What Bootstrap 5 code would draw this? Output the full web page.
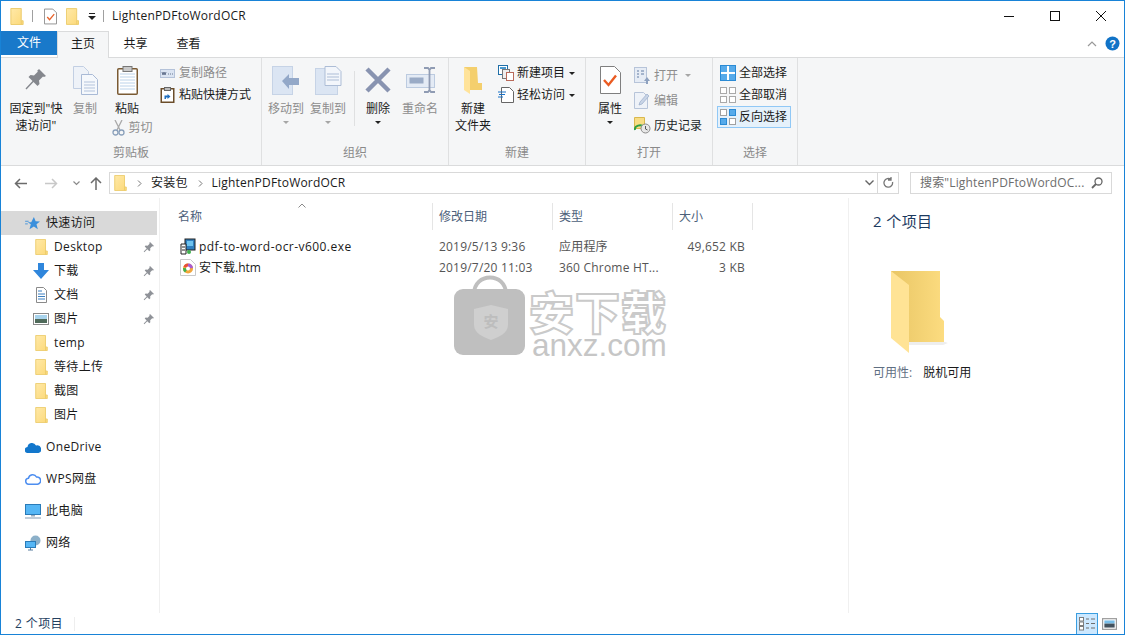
<!DOCTYPE html>
<html lang="zh-CN">
<head>
<meta charset="UTF-8">
<title>LightenPDFtoWordOCR</title>
<link href="https://cdn.jsdelivr.net/npm/bootstrap@5.3.0/dist/css/bootstrap.min.css" rel="stylesheet">
<style>
html, body { height: 100%; overflow: hidden; }
body { font-family: "Open Sans", "Noto Sans CJK SC", sans-serif; font-size: 12px; line-height: 16px; color: #1a1a1a; background: #fff; }
.win { width: 1125px; height: 635px; border: 1px solid #1883d7; position: relative; overflow: hidden; }

/* title bar */
.titlebar { height: 30px; }
.qat { padding-left: 9px; }
.q-sep1 { margin: 0 11px 0 8px; }
.q-doc { margin-right: 9px; }
.q-caret { margin: 0 7px 0 9px; }
.q-sep2 { margin-right: 8px; }
.title-text { letter-spacing: .2px; }
.qsep { width: 1px; height: 12px; background: #a0a0a0; }
.capbtn { width: 46px; height: 29px; }

/* tabs */
.tabrow { height: 26px; position: relative; }
.tab-file { width: 56px; height: 24px; background: #1979ca; color: #fff; }
.tab-home { width: 52px; height: 27px; padding-bottom: 2px; background: #f5f6f7; border: 1px solid #dadbdc; border-bottom: 0; position: relative; z-index: 2; }
.tab-plain { width: 53px; height: 25px; }
.tab-tools { padding: 5px 4px 0 0; }

/* ribbon */
.ribbon { height: 109px; background: #f5f6f7; border-top: 1px solid #dadbdc; border-bottom: 1px solid #dadbdc; }
.rgroup { height: 107px; border-right: 1px solid #dfe0e1; flex: none; padding-top: 2px; }
.g-clip { width: 261px; }
.g-org { width: 187px; }
.g-new { width: 137px; }
.g-open { width: 127px; }
.g-sel { width: 85px; }
.rbody { height: 85px; }
.rlabel { height: 18px; text-align: center; color: #8a8a8a; }
.rbig { display: flex; flex-direction: column; align-items: center; flex: none; text-align: center; line-height: 17px; }
.ricon { height: 40px; display: flex; align-items: center; justify-content: center; }
.rsmall { display: flex; align-items: center; gap: 3px; height: 22px; white-space: nowrap; }
.rsmall-tall { height: 25px; }
.muted-t { color: #8d8d8d; }
.caret-d { width: 0; height: 0; border-left: 3px solid transparent; border-right: 3px solid transparent; border-top: 3px solid #222; display: inline-block; }
.caret-g { border-top-color: #a6a6a6; }
.caret-near { margin-left: 1px; }
.rvsep { width: 1px; height: 55px; background: #dfe0e1; margin: 11px 0 0 5px; flex: none; }
.rselected { border: 1px solid #90c8f6; background: #e5f1fb; width: 74px; padding-left: 2px; }
.b-pin { width: 64px; margin-left: 3px; }
.b-copy { width: 34px; }
.b-paste { width: 50px; flex: none; }
.b-cut { margin: 3px 0 0 10px; white-space: nowrap; }
.b-paste-lbl { line-height: 17px; }
.col-clip { margin-left: 8px; padding-top: 2px; }
.col-clip .rsmall { gap: 4px; }
.b-move { width: 42px; margin-left: 3px; }
.b-copyto { width: 42px; }
.b-del { width: 38px; margin-left: 4px; }
.b-ren { width: 40px; margin-left: 3px; }
.b-newf { width: 48px; }
.col-new { padding: 2px 0 0 1px; }
.b-prop { width: 48px; }
.col-open { padding-top: 3px; }
.col-sel { padding: 2px 0 0 4px; }
.sel-plain { padding-left: 3px; }

/* address bar */
.addrbar { height: 32px; padding-top: 2px; }
.nav-btns { width: 108px; padding-left: 13px; gap: 18px; }
.nb-down { margin: 0 -2px 0 -3px; }
.nb-up { margin-left: -6px; }
.crumbs { width: 768px; height: 22px; border: 1px solid #d9d9d9; border-right: 0; }
.cr-fold { margin-left: 4px; }
.cr-chev { margin: 0 9px 0 10px; }
.cr-drop { margin: 0 3px 0 auto; }
.refresh { width: 22px; height: 22px; border: 1px solid #d9d9d9; }
.searchbox { width: 202px; height: 22px; border: 1px solid #d9d9d9; color: #6d6d6d; margin-left: 11px; padding: 0 8px 0 9px; white-space: nowrap; overflow: hidden; letter-spacing: .15px; }
.crumb-t { letter-spacing: .2px; }

/* main */
.mainrow { height: 415px; }
.nav-pane { width: 159px; flex: none; border-right: 1px solid #f0f0f0; padding: 13px 2px 0 0; }
.nav-item { height: 24px; display: flex; align-items: center; position: relative; white-space: nowrap; }
.nav-lvl2 { padding-left: 34px; gap: 6px; }
.nav-lvl1 { padding-left: 24px; gap: 5px; }
.nav-active { background: #d9d9d9; }
.nav-gap { height: 8px; }
.nav-pin { margin-left: auto; margin-right: 2px; flex: none; }
.nav-txt { letter-spacing: .35px; }
.ico-wide { margin: 0 -1px 0 -2px; }
.file-pane { width: 689px; flex: none; border-right: 1px solid #f0f0f0; position: relative; }
.fhead { height: 38px; color: #4c607a; }
.fh { flex: none; height: 27px; padding-left: 6px; border-right: 1px solid #e5e5e5; display: flex; align-items: center; margin-top: 5px; width: 120px; }
.fh-name { width: 273px; padding-left: 18px; }
.fh-size { width: 80px; }
.sort-mark { position: absolute; left: 138px; top: 5px; }
.frow { height: 21px; display: flex; align-items: center; color: #333; }
.fc-name { width: 274px; padding-left: 20px; display: flex; align-items: center; gap: 3px; letter-spacing: .45px; color: #1a1a1a; flex: none; }
.fc-name-cn { letter-spacing: 0; }
.fc-date, .fc-type { width: 120px; padding-left: 5px; color: #555; flex: none; letter-spacing: .2px; }
.fc-size { width: 71px; text-align: right; color: #555; flex: none; letter-spacing: .2px; }
.detail-pane { padding: 13px 0 0 24px; flex: 1; }
.detail-head { font-size: 15px; line-height: 20px; color: #1c3a5f; letter-spacing: .4px; }
.detail-fold { display: block; margin: 39px 0 0 17px; }
.detail-avail { margin-top: 11px; }
.avail-k { color: #5f6f82; margin-right: 11px; }

/* status bar */
.statusbar { height: 21px; padding-left: 14px; color: #24405f; }
.status-txt { letter-spacing: .4px; }
.status-sep { width: 1px; height: 14px; background: #eee; margin-left: 11px; }
.view-group { gap: 4px; margin-right: 7px; }
.view-on { width: 22px; height: 22px; background: #cce8ff; border: 1px solid #3a9ee0; }

/* watermark lies over the file list */
.wm { position: absolute; left: 294px; top: 76px; width: 220px; height: 92px; pointer-events: none; }
.wm-cn { position: absolute; left: 75px; top: 17px; font-family: "Noto Sans CJK SC", sans-serif; font-size: 45px; line-height: 40px; font-weight: 900; color: #fff; -webkit-text-stroke: 2px #cacaca; letter-spacing: 1px; white-space: nowrap; }
.wm-en { position: absolute; left: 78px; top: 60px; font-family: "Liberation Sans", sans-serif; font-size: 31.500px; line-height: 22px; color: #c6c6c6; white-space: nowrap; }
.wm-bag { position: absolute; left: 0; top: 0; }
.wm-an { position: absolute; left: 25px; top: 38px; width: 24px; text-align: center; font-family: "Noto Sans CJK SC", sans-serif; font-size: 15px; line-height: 18px; color: #bdbdbd; font-weight: 700; }
</style>
</head>
<body>
<svg width="0" height="0" class="position-absolute">
  <defs>
    <linearGradient id="fg" x1="0" y1="0" x2="1" y2="1"><stop offset="0" stop-color="#ffe9a8"/><stop offset="1" stop-color="#fcd979"/></linearGradient>
    <linearGradient id="fback" x1="0" y1="0" x2="1" y2="0"><stop offset="0" stop-color="#e9c665"/><stop offset="1" stop-color="#fcdc80"/></linearGradient>
    <symbol id="fold" viewBox="0 0 14 18">
      <path d="M.5 .5h11v13h2v4H.5z" fill="url(#fg)" stroke="#eccb6a"/>
      <path d="M11.500 13.500v4" stroke="#eccb6a"/>
    </symbol>
    <symbol id="pin" viewBox="0 0 12 12">
      <path d="M7 1l4 4-1 .6-.8-.3-2 2 .1 2-1 .9-2-2-3 3-.6-.6 3-3-2-2 .9-1 2 .1 2-2-.3-.8z" fill="#8f9298"/>
    </symbol>
  </defs>
</svg>
<div class="win d-flex flex-column">

  <div class="titlebar d-flex align-items-center">
    <div class="qat d-flex align-items-center flex-grow-1">
      <svg width="14" height="17"><use href="#fold"/></svg>
      <span class="qsep q-sep1"></span>
      <svg width="13" height="17" viewBox="0 0 14 17" class="q-doc"><path d="M.5 .5h9l4 4v12H.5z" fill="#fff" stroke="#8d8d8d"/><path d="M3.500 9l2.500 3 5-6" fill="none" stroke="#e8622a" stroke-width="1.400"/></svg>
      <svg width="13" height="17"><use href="#fold"/></svg>
      <svg width="8" height="7" viewBox="0 0 8 7" class="q-caret"><path d="M1 0h6v1H1zM0 3h8L4 7z" fill="#222"/></svg>
      <span class="qsep q-sep2"></span>
      <span class="title-text">LightenPDFtoWordOCR</span>
    </div>
    <div class="d-flex">
      <div class="capbtn d-flex align-items-center justify-content-center"><svg width="10" height="10"><path d="M0 5.500h10" stroke="#111"/></svg></div>
      <div class="capbtn d-flex align-items-center justify-content-center"><svg width="10" height="10"><rect x=".5" y=".5" width="9" height="9" fill="none" stroke="#111"/></svg></div>
      <div class="capbtn d-flex align-items-center justify-content-center"><svg width="10" height="10"><path d="M0 0l10 10M10 0L0 10" stroke="#111"/></svg></div>
    </div>
  </div>

  <div class="tabrow d-flex align-items-start">
    <div class="tab-file d-flex align-items-center justify-content-center">文件</div>
    <div class="tab-home d-flex align-items-center justify-content-center">主页</div>
    <div class="tab-plain d-flex align-items-center justify-content-center">共享</div>
    <div class="tab-plain d-flex align-items-center justify-content-center">查看</div>
    <div class="tab-tools ms-auto d-flex align-items-center gap-2">
      <svg width="10" height="6" viewBox="0 0 10 6"><path d="M1 5l4-4 4 4" fill="none" stroke="#999" stroke-width="1.200"/></svg>
      <svg width="15" height="15" viewBox="0 0 15 15"><circle cx="7.500" cy="7.500" r="7" fill="#1173c7"/><text x="7.500" y="11.500" font-size="11" font-weight="700" fill="#fff" text-anchor="middle" font-family="Liberation Sans">?</text></svg>
    </div>
  </div>

  <div class="ribbon d-flex">
    <!-- clipboard -->
    <div class="rgroup g-clip">
      <div class="rbody d-flex">
        <div class="rbig b-pin">
          <div class="ricon"><svg width="22" height="24" viewBox="0 0 22 24"><path d="M14 1l7 7-2 1-1-.5-4 4 .5 3.500-2 2-4-4-7 7.500-1-1 7-7.500-4-4 2-2 3.500.5 4-4L12 3z" fill="#84878d"/></svg></div>
          <div>固定到"快<br>速访问"</div>
        </div>
        <div class="rbig b-copy muted-t">
          <div class="ricon"><svg width="25" height="29" viewBox="0 0 25 29"><path d="M.5 .5h10l5 5v17H.5z" fill="#eef2f8" stroke="#c2cfe3"/><path d="M8.500 8.500h11l5 5v15h-16z" fill="#f5f8fc" stroke="#a9bad6"/><path d="M11 16h11M11 19h11M11 22h11M11 25h11" stroke="#b3c3dc"/></svg></div>
          <div>复制</div>
        </div>
        <div class="b-paste d-flex flex-column align-items-center">
          <div class="ricon"><svg width="21" height="29" viewBox="0 0 21 29"><rect x=".75" y="2.750" width="19.500" height="25.500" rx="1" fill="#fff" stroke="#7a5a33" stroke-width="1.500"/><path d="M3 8h15M3 11h15M3 14h15M3 17h15M3 20h15M3 23h15" stroke="#bcd3ea"/><rect x="6" y=".5" width="9" height="5" fill="#c9c9c9" stroke="#777"/></svg></div>
          <div class="b-paste-lbl">粘贴</div>
          <div class="b-cut d-flex align-items-center muted-t gap-1"><svg width="13" height="16" viewBox="0 0 13 16"><path d="M3 0l5 10M10 0L5 10" stroke="#a9a9a9" stroke-width="1.300"/><circle cx="3.500" cy="12.500" r="2.500" fill="none" stroke="#8aa0bb" stroke-width="1.300"/><circle cx="9.500" cy="12.500" r="2.500" fill="none" stroke="#8aa0bb" stroke-width="1.300"/></svg>剪切</div>
        </div>
        <div class="col-clip">
          <div class="rsmall muted-t"><svg width="15" height="9" viewBox="0 0 15 9"><rect x=".5" y=".5" width="14" height="8" fill="#dbe4f2" stroke="#b4c2d9"/><path d="M2 3l1 3 1-3 1 3 1-3M8 5h1M10 5h1M12 5h1" stroke="#4a5a78" stroke-width=".8" fill="none"/></svg>复制路径</div>
          <div class="rsmall"><svg width="15" height="16" viewBox="0 0 14 16"><rect x=".75" y="1.750" width="12.500" height="13.500" fill="#fff" stroke="#6b4d2a" stroke-width="1.500"/><rect x="4" y=".5" width="6" height="3" fill="#bbb" stroke="#666"/><path d="M4 12V8.500h3V7l3 2.500L7 12v-1.500H5.500V12z" fill="#1f6fc0"/></svg>粘贴快捷方式</div>
        </div>
      </div>
      <div class="rlabel">剪贴板</div>
    </div>
    <!-- organize -->
    <div class="rgroup g-org">
      <div class="rbody d-flex">
        <div class="rbig b-move muted-t">
          <div class="ricon"><svg width="28" height="29" viewBox="0 0 28 29"><rect x=".5" y=".5" width="20" height="28" fill="#dbe5f3" stroke="#c6d3e6"/><path d="M10 15l7-7v4h10v7H17v4z" fill="#93a8c8"/></svg></div>
          <div>移动到</div>
          <span class="caret-d caret-g mt-1"></span>
        </div>
        <div class="rbig b-copyto muted-t">
          <div class="ricon"><svg width="27" height="29" viewBox="0 0 27 29"><rect x=".5" y="2.500" width="22" height="26" fill="#dbe5f3" stroke="#c6d3e6"/><path d="M10 .5h11l5 5v14H10z" fill="#f3f6fb" stroke="#adbdd6"/><path d="M12 8h12M12 11h12M12 14h12" stroke="#adbdd6"/></svg></div>
          <div>复制到</div>
          <span class="caret-d caret-g mt-1"></span>
        </div>
        <div class="rvsep"></div>
        <div class="rbig b-del">
          <div class="ricon"><svg width="26" height="26" viewBox="0 0 26 26"><path d="M2 2l22 22M24 2L2 24" stroke="#8893b0" stroke-width="4.500"/></svg></div>
          <div>删除</div>
          <span class="caret-d mt-1"></span>
        </div>
        <div class="rbig b-ren muted-t">
          <div class="ricon"><svg width="29" height="26" viewBox="0 0 29 26"><rect x=".5" y="7.500" width="28" height="13" fill="#e4ebf5" stroke="#bccbe0"/><rect x="3.500" y="10.500" width="14" height="6" fill="#9aabc6"/><path d="M18 1h4l1.500 2L25 1h4M23.500 3v20M18 25h4l1.500-2 1.500 2h4" fill="none" stroke="#8f9bb3" stroke-width="1.800"/></svg></div>
          <div>重命名</div>
        </div>
      </div>
      <div class="rlabel">组织</div>
    </div>
    <!-- new -->
    <div class="rgroup g-new">
      <div class="rbody d-flex">
        <div class="rbig b-newf">
          <div class="ricon"><svg width="20" height="28" viewBox="0 0 20 28"><path d="M1 1h13l1 16h4v7H5z" fill="#f4cf6d"/><path d="M1 1l6 4v23l-6-4z" fill="#ffe39a"/></svg></div>
          <div>新建<br>文件夹</div>
        </div>
        <div class="col-new">
          <div class="rsmall"><svg width="16" height="16" viewBox="0 0 16 16"><rect x=".5" y=".5" width="9" height="9" fill="#fff" stroke="#1f6fa8"/><rect x="2" y="2" width="6" height="2" fill="#4a9ad0"/><rect x="4.500" y="4.500" width="7" height="9" fill="#eee" stroke="#777"/><rect x="8.500" y="7.500" width="7" height="8" fill="#fff" stroke="#b96a5a"/></svg>新建项目<span class="caret-d caret-near"></span></div>
          <div class="rsmall"><svg width="16" height="16" viewBox="0 0 16 16"><path d="M3.500 .5h8l4 4v11h-12z" fill="#fff" stroke="#666"/><path d="M0 5h8M1 7.500h6M0 10h5" stroke="#1a73c8"/></svg>轻松访问<span class="caret-d caret-near"></span></div>
        </div>
      </div>
      <div class="rlabel">新建</div>
    </div>
    <!-- open -->
    <div class="rgroup g-open">
      <div class="rbody d-flex">
        <div class="rbig b-prop">
          <div class="ricon"><svg width="21" height="28" viewBox="0 0 21 28"><path d="M.5 .5h14l6 6v21H.5z" fill="#fff" stroke="#7f7f7f"/><path d="M4 14l4.500 5L16 9.500" fill="none" stroke="#ea5b22" stroke-width="2.400"/></svg></div>
          <div>属性</div>
          <span class="caret-d mt-1"></span>
        </div>
        <div class="col-open muted-t">
          <div class="rsmall rsmall-tall"><svg width="17" height="17" viewBox="0 0 17 17"><rect x=".5" y=".5" width="12" height="15" fill="#e6ecf5" stroke="#b7c4d9"/><path d="M3 4h2M3 7h2M3 10h2M7 4h3M7 7h3" stroke="#8ea1bf" stroke-width="1.400"/><path d="M10 14l3-4 3 4h-2v3h-2v-3z" fill="#8ea1bf"/></svg>打开<span class="caret-d caret-g ms-1"></span></div>
          <div class="rsmall rsmall-tall"><svg width="17" height="17" viewBox="0 0 17 17"><path d="M.5 .5h9l4 4v12H.5z" fill="#eef2f8" stroke="#b7c4d9"/><path d="M5 13l1-3 7-8 2 2-7 8z" fill="#c9d5e7" stroke="#98abc8" stroke-width=".7"/></svg>编辑</div>
          <div class="rsmall rsmall-tall text-body"><svg width="17" height="17" viewBox="0 0 17 17"><path d="M.5 .5h10v11h-10z" fill="#f8dd84" stroke="#d9b84e"/><path d="M1 13a5 4 0 0 1 9-3" fill="none" stroke="#2f9e41" stroke-width="2"/><circle cx="11.500" cy="11.500" r="4.500" fill="#e8e8e8" stroke="#8a8a8a"/><path d="M11.500 9v3l2 1" fill="none" stroke="#555"/></svg>历史记录</div>
        </div>
      </div>
      <div class="rlabel">打开</div>
    </div>
    <!-- select -->
    <div class="rgroup g-sel">
      <div class="rbody col-sel">
        <div class="rsmall sel-plain"><svg width="16" height="16" viewBox="0 0 16 16"><rect x=".5" y=".5" width="15" height="15" fill="#fff" stroke="#2a8ad4"/><path d="M1 1h6v6H1zM9 1h6v6H9zM1 9h6v6H1zM9 9h6v6H9z" fill="#56aaea"/></svg>全部选择</div>
        <div class="rsmall sel-plain"><svg width="16" height="16" viewBox="0 0 16 16" fill="#fff" stroke="#a9a9a9"><rect x=".5" y=".5" width="6" height="6"/><rect x="9.500" y=".5" width="6" height="6"/><rect x=".5" y="9.500" width="6" height="6"/><rect x="9.500" y="9.500" width="6" height="6"/></svg>全部取消</div>
        <div class="rsmall rselected"><svg width="16" height="16" viewBox="0 0 16 16"><g fill="#fff" stroke="#a0a0a0"><rect x=".5" y=".5" width="6" height="6"/><rect x="9.500" y="9.500" width="6" height="6"/></g><g fill="#56aaea" stroke="#2a8ad4"><rect x="9.500" y=".5" width="6" height="6"/><rect x=".5" y="9.500" width="6" height="6"/></g></svg>反向选择</div>
      </div>
      <div class="rlabel">选择</div>
    </div>
  </div>

  <div class="addrbar d-flex align-items-center">
    <div class="nav-btns d-flex align-items-center">
      <svg width="13" height="11" viewBox="0 0 13 11"><path d="M6 1L1.500 5.500 6 10M1.500 5.500H13" fill="none" stroke="#6b6b6b" stroke-width="1.500"/></svg>
      <svg width="13" height="11" viewBox="0 0 13 11"><path d="M7 1l4.500 4.500L7 10M11.500 5.500H0" fill="none" stroke="#c8c8c8" stroke-width="1.500"/></svg>
      <svg width="7" height="5" viewBox="0 0 7 5" class="nb-down"><path d="M.5 .5l3 3 3-3" fill="none" stroke="#8a8a8a" stroke-width="1.200"/></svg>
      <svg width="12" height="13" viewBox="0 0 12 13" class="nb-up"><path d="M1 6l5-5 5 5M6 1v12" fill="none" stroke="#6b6b6b" stroke-width="1.500"/></svg>
    </div>
    <div class="crumbs d-flex align-items-center">
      <svg width="13" height="16" class="cr-fold"><use href="#fold"/></svg>
      <svg width="5" height="7" viewBox="0 0 5 7" class="cr-chev"><path d="M1 .5l3 3-3 3" fill="none" stroke="#777"/></svg>
      <span class="crumb-t">安装包</span>
      <svg width="5" height="7" viewBox="0 0 5 7" class="cr-chev"><path d="M1 .5l3 3-3 3" fill="none" stroke="#777"/></svg>
      <span class="crumb-t">LightenPDFtoWordOCR</span>
      <svg width="9" height="6" viewBox="0 0 9 6" class="cr-drop"><path d="M.5 .5l4 4 4-4" fill="none" stroke="#666" stroke-width="1.400"/></svg>
    </div>
    <div class="refresh d-flex align-items-center justify-content-center"><svg width="11" height="12" viewBox="0 0 11 12"><path d="M9.500 5a4.300 4.300 0 1 1-1.500-2.500M8 0v3H5" fill="none" stroke="#777" stroke-width="1.300"/></svg></div>
    <div class="searchbox d-flex align-items-center justify-content-between">
      <span>搜索"LightenPDFtoWordOC...</span>
      <svg width="12" height="12" viewBox="0 0 12 12"><circle cx="7.500" cy="4.500" r="3.500" fill="none" stroke="#666" stroke-width="1.300"/><path d="M5 7l-4 4" stroke="#666" stroke-width="1.800"/></svg>
    </div>
  </div>

  <div class="mainrow d-flex position-relative">
    <div class="nav-pane">
      <div class="nav-item nav-lvl1 nav-active"><svg width="16" height="14" viewBox="0 0 18 16"><path d="M10 1l2 5 5 .3-4 3 1.500 5.700L10 12l-5 3 1.500-5.500L3 7h4z" fill="#3a8fdc"/><path d="M0 6h4M0 9h3" stroke="#3a8fdc"/></svg><span class="nav-txt">快速访问</span></div>
      <div class="nav-item nav-lvl2"><svg width="13" height="16"><use href="#fold"/></svg><span class="nav-txt">Desktop</span><svg class="nav-pin" width="12" height="12"><use href="#pin"/></svg></div>
      <div class="nav-item nav-lvl2"><svg width="16" height="16" viewBox="0 0 16 16" class="ico-wide"><path d="M5 0h6v7h5l-8 9-8-9h5z" fill="#2f86dc"/></svg><span class="nav-txt">下载</span><svg class="nav-pin" width="12" height="12"><use href="#pin"/></svg></div>
      <div class="nav-item nav-lvl2"><svg width="13" height="16" viewBox="1 0 13 16"><path d="M2.500 .5h7l3 3v12h-10z" fill="#fff" stroke="#8a8a8a"/><path d="M4 4h4M4 7h7M4 9.500h7M4 12h7" stroke="#3b7fc0"/></svg><span class="nav-txt">文档</span><svg class="nav-pin" width="12" height="12"><use href="#pin"/></svg></div>
      <div class="nav-item nav-lvl2"><svg width="16" height="12" viewBox="0 0 16 12" class="ico-wide"><rect x=".5" y=".5" width="15" height="11" fill="#fff" stroke="#8a8a8a"/><rect x="2" y="2" width="12" height="4" fill="#a8d3ec"/><rect x="2" y="6" width="12" height="4" fill="#4f6a5a"/></svg><span class="nav-txt">图片</span><svg class="nav-pin" width="12" height="12"><use href="#pin"/></svg></div>
      <div class="nav-item nav-lvl2"><svg width="13" height="16"><use href="#fold"/></svg><span class="nav-txt">temp</span></div>
      <div class="nav-item nav-lvl2"><svg width="13" height="16"><use href="#fold"/></svg><span class="nav-txt">等待上传</span></div>
      <div class="nav-item nav-lvl2"><svg width="13" height="16"><use href="#fold"/></svg><span class="nav-txt">截图</span></div>
      <div class="nav-item nav-lvl2"><svg width="13" height="16"><use href="#fold"/></svg><span class="nav-txt">图片</span></div>
      <div class="nav-gap"></div>
      <div class="nav-item nav-lvl1"><svg width="16" height="11" viewBox="0 0 16 11"><path d="M3 11a3 3 0 0 1-.5-6A4.500 4.500 0 0 1 11 3.500 3.800 3.800 0 0 1 13.500 11z" fill="#1277cc"/></svg><span class="nav-txt">OneDrive</span></div>
      <div class="nav-gap"></div>
      <div class="nav-item nav-lvl1"><svg width="16" height="12" viewBox="0 0 16 12"><path d="M4 11.200a3 3 0 0 1-.5-6A4.300 4.300 0 0 1 11.500 4a3.600 3.600 0 0 1 1 7.200z" fill="none" stroke="#4d8ef0" stroke-width="1.500"/></svg><span class="nav-txt">WPS网盘</span></div>
      <div class="nav-gap"></div>
      <div class="nav-item nav-lvl1"><svg width="16" height="15" viewBox="0 0 16 15"><rect x=".5" y=".5" width="15" height="10" fill="#55b6f5" stroke="#2a7bb8"/><path d="M6 11h4v1.500H6z" fill="#9ab"/><path d="M0 14h16" stroke="#9fb2c5" stroke-width="1.300"/></svg><span class="nav-txt">此电脑</span></div>
      <div class="nav-gap"></div>
      <div class="nav-item nav-lvl1"><svg width="16" height="16" viewBox="0 0 16 16"><circle cx="10.500" cy="5.500" r="5" fill="#8cb0c9"/><rect x=".5" y="6.500" width="10" height="6" fill="#55b6f5" stroke="#2a7bb8"/><path d="M3 15h5M5.500 13v2" stroke="#5a7f9f"/></svg><span class="nav-txt">网络</span></div>
    </div>

    <div class="file-pane">
      <div class="fhead d-flex position-relative">
        <div class="fh fh-name">名称</div>
        <div class="fh">修改日期</div>
        <div class="fh">类型</div>
        <div class="fh fh-size">大小</div>
        <svg class="sort-mark" width="8" height="5" viewBox="0 0 8 5"><path d="M.5 4.500L4 1l3.500 3.500" fill="none" stroke="#8a8a8a"/></svg>
      </div>
      <div class="frow">
        <div class="fc-name"><svg width="16" height="17" viewBox="0 0 16 17"><rect x="5" y="1" width="10" height="11" fill="#2e7fbf" stroke="#222"/><rect x="7" y="3" width="6" height="5" fill="#6ec3ef"/><path d="M1 6h5v10H1z" fill="#fff" stroke="#222"/><path d="M2 9h3M2 12h3" stroke="#222"/><circle cx="9" cy="14" r="2" fill="#3fb24d"/></svg><span>pdf-to-word-ocr-v600.exe</span></div>
        <div class="fc-date">2019/5/13 9:36</div>
        <div class="fc-type">应用程序</div>
        <div class="fc-size">49,652 KB</div>
      </div>
      <div class="frow">
        <div class="fc-name fc-name-cn"><svg width="16" height="17" viewBox="0 0 16 17"><path d="M.5 .5h10l5 5v11H.5z" fill="#fff" stroke="#c9c9c9"/><circle cx="8" cy="9.500" r="5" fill="#f2a63a"/><path d="M8 9.500L3.500 7.500A5 5 0 0 1 8 4.500z" fill="#e8503a"/><path d="M8 9.500V4.500A5 5 0 0 1 13 9z" fill="#a95ccf"/><path d="M8 9.500L5 13.500A5 5 0 0 1 3 9z" fill="#3fb24d"/><circle cx="8" cy="9.500" r="2" fill="#fff"/></svg><span>安下载.htm</span></div>
        <div class="fc-date">2019/7/20 11:03</div>
        <div class="fc-type">360 Chrome HT...</div>
        <div class="fc-size">3 KB</div>
      </div>
      <div class="wm">
        <svg class="wm-bag" width="72" height="82" viewBox="0 0 72 82">
          <path d="M20 20c0-22 32-22 32 0" fill="none" stroke="#bfbfbf" stroke-width="4"/>
          <rect x="0" y="15" width="71" height="66" rx="9" fill="#bfbfbf"/>
          <path d="M37 31l17 4v16c0 8-9 12-17 15-8-3-17-7-17-15V35z" fill="#cfcfcf"/>
        </svg>
        <span class="wm-an">安</span>
        <span class="wm-cn">安下载</span>
        <span class="wm-en">anxz.com</span>
      </div>
    </div>

    <div class="detail-pane">
      <div class="detail-head">2 个项目</div>
      <svg width="60" height="84" viewBox="0 0 60 84" class="detail-fold">
        <path d="M1 1h49v46l4 4v21H17L1 62z" fill="url(#fback)"/>
        <path d="M1 1l18 14v68L1 68z" fill="#ffe395"/>
        <path d="M19 72h36l3 1-5 2H19z" fill="#eee"/>
      </svg>
      <div class="detail-avail"><span class="avail-k">可用性:</span><span>脱机可用</span></div>
    </div>
  </div>

  <div class="statusbar d-flex align-items-center">
    <span class="status-txt">2 个项目</span><span class="status-sep"></span>
    <div class="view-group ms-auto d-flex align-items-center">
      <div class="view-on d-flex align-items-center justify-content-center"><svg width="17" height="14" viewBox="0 0 17 14"><g fill="#fff" stroke="#7d7d7d"><rect x=".5" y=".5" width="4" height="3.500"/><rect x=".5" y="5" width="4" height="3.500"/><rect x=".5" y="9.500" width="4" height="3.500"/></g><path d="M7 2h3M12 2h4M7 6.500h3M12 6.500h4M7 11h3M12 11h4" stroke="#6f6f6f"/></svg></div>
      <svg width="15" height="12" viewBox="0 0 19 15"><rect x=".75" y=".75" width="17.500" height="13.500" fill="#fff" stroke="#9a9a9a" stroke-width="1.500"/><rect x="3" y="3" width="13" height="4" fill="#77bde8"/><rect x="3" y="7" width="13" height="5" fill="#43525e"/></svg>
    </div>
  </div>
</div>
</body>
</html>
